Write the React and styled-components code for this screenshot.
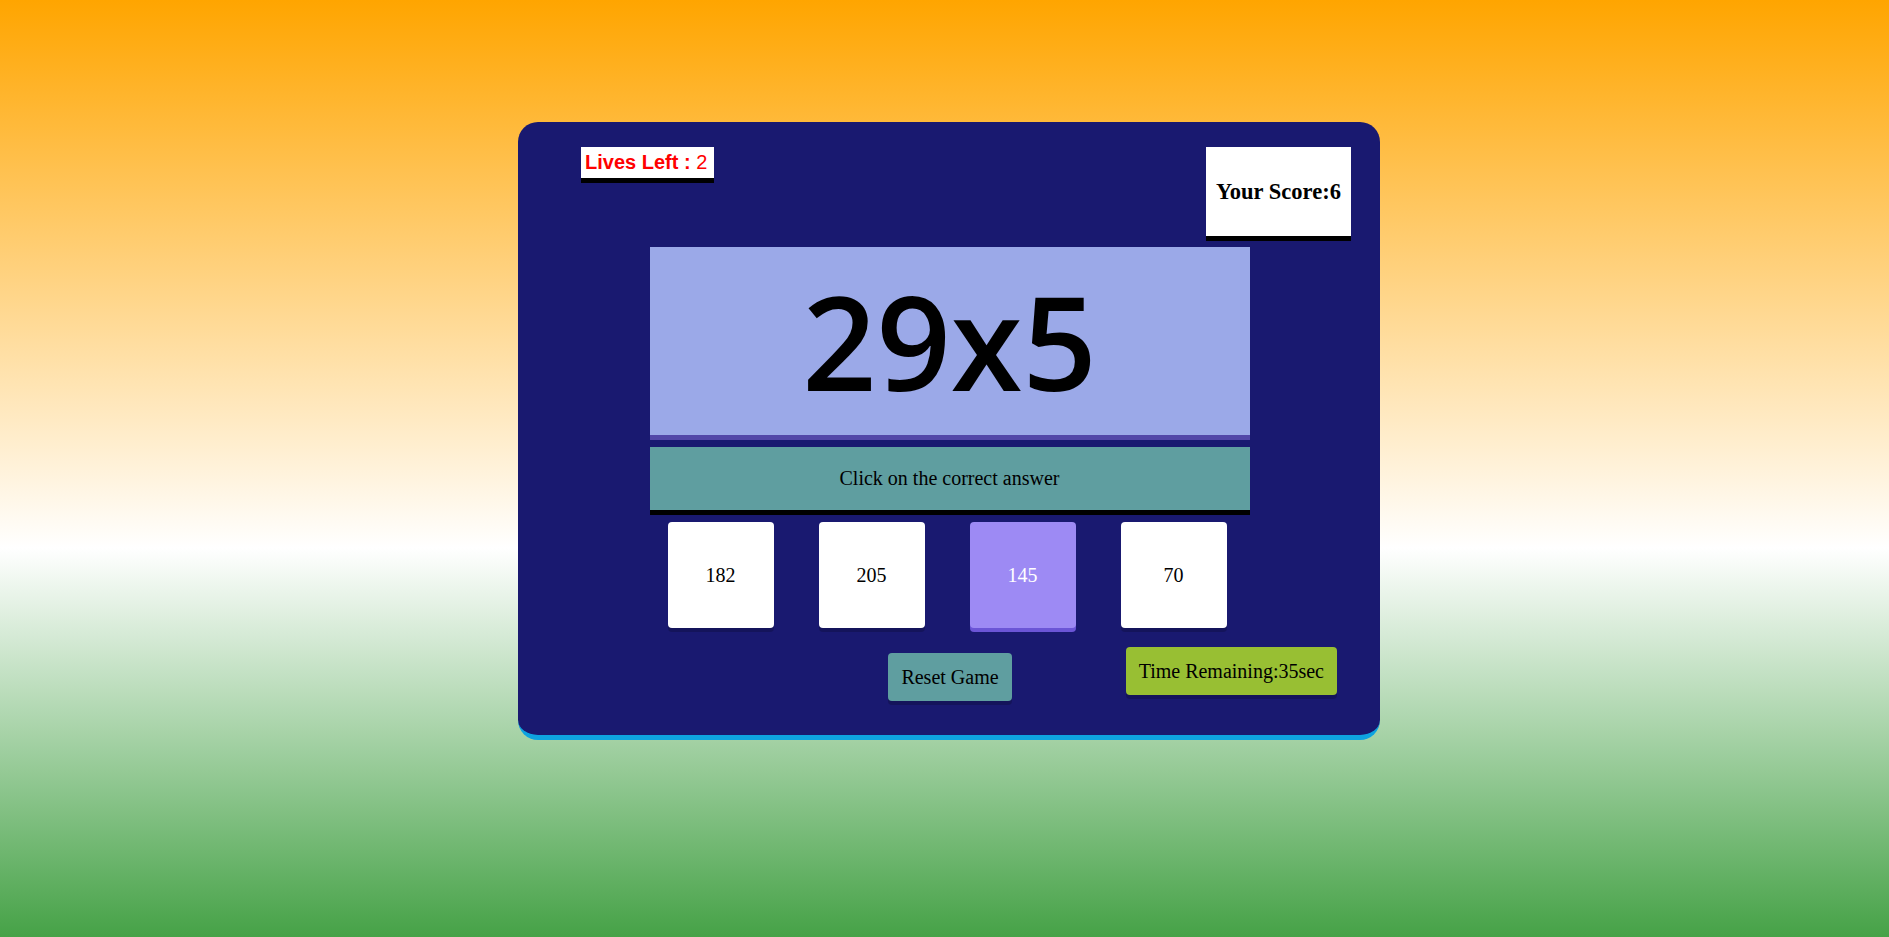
import React from "react";
import styled, { createGlobalStyle } from "styled-components";

const GlobalStyle = createGlobalStyle`
  html, body {
    margin: 0;
    padding: 0;
  }
  body {
    min-height: 100vh;
    font-family: "Liberation Serif", "Times New Roman", serif;
    background: linear-gradient(to bottom, #ffa500 0%, #ffffff 58.5%, #46a247 100%);
  }
`;

const Page = styled.div`
  min-height: 100vh;
  box-sizing: border-box;
  padding: 122px 0 0 9px;
  display: flex;
  justify-content: center;
  align-items: flex-start;
`;

const Card = styled.div`
  width: 862px;
  height: 618px;
  box-sizing: border-box;
  background: #191970;
  border-radius: 20px;
  border-bottom: 5px solid #0ea3e0;
  padding-top: 25px;
  display: flex;
  flex-direction: column;
`;

const Header = styled.div`
  display: flex;
  justify-content: space-between;
  align-items: flex-start;
  padding: 0 29px 0 63px;
`;

const Lives = styled.div`
  background: #ffffff;
  color: #ff0000;
  font-family: "Liberation Sans", Arial, sans-serif;
  font-size: 20px;
  line-height: 23px;
  padding: 4px 7px 4px 4px;
  border-bottom: 5px solid #000000;
  white-space: nowrap;
`;

const LivesLabel = styled.b`
  font-weight: 700;
`;

const Score = styled.div`
  width: 145px;
  height: 89px;
  background: #ffffff;
  border-bottom: 5px solid #000000;
  display: flex;
  align-items: center;
  justify-content: center;
  font-family: "Liberation Serif", "Times New Roman", serif;
  font-weight: 700;
  font-size: 22.5px;
  color: #000;
  white-space: nowrap;
`;

const Main = styled.div`
  width: 600px;
  margin: 6px auto 0;
  padding-left: 1px;
  display: flex;
  flex-direction: column;
`;

const Question = styled.div`
  height: 188px;
  background: #9ba9e8;
  border-bottom: 5px solid #5247a8;
  display: flex;
  align-items: center;
  justify-content: center;
  font-family: "Comic Sans MS", "Open Sans", sans-serif;
  font-size: 130px;
  font-weight: 600;
  color: #000;
  line-height: 1;
`;

const Instruction = styled.div`
  margin-top: 7px;
  height: 63px;
  background: #5f9ea0;
  border-bottom: 5px solid #000000;
  display: flex;
  align-items: center;
  justify-content: center;
  font-size: 20px;
  color: #000;
`;

const Answers = styled.div`
  margin-top: 7px;
  display: flex;
  gap: 45px;
  padding-left: 18px;
`;

const Answer = styled.div`
  width: 106px;
  height: 106px;
  border-radius: 4px;
  display: flex;
  align-items: center;
  justify-content: center;
  font-size: 20px;
  background: ${(p) => (p.$active ? "#9d8af4" : "#ffffff")};
  color: ${(p) => (p.$active ? "#ffffff" : "#000000")};
  box-shadow: ${(p) =>
    p.$active ? "0 4px 0 #6b55d6" : "0 4px 0 rgba(0, 0, 0, 0.18)"};
`;

const Footer = styled.div`
  margin-top: 19px;
  display: grid;
  grid-template-columns: 1fr auto 1fr;
  align-items: start;
`;

const ResetButton = styled.div`
  grid-column: 2;
  margin-top: 6px;
  margin-left: 2px;
  background: #5f9ea0;
  color: #000;
  font-size: 20px;
  line-height: 23px;
  padding: 12.5px 13px;
  border-radius: 4px;
  box-shadow: 0 4px 0 rgba(0, 0, 0, 0.18);
  white-space: nowrap;
`;

const Timer = styled.div`
  grid-column: 3;
  justify-self: end;
  margin-right: 43px;
  background: #98bf33;
  color: #000;
  font-size: 20px;
  line-height: 23px;
  padding: 12.5px 13px;
  border-radius: 4px;
  box-shadow: 0 4px 0 rgba(0, 0, 0, 0.18);
  white-space: nowrap;
`;

const answers = [
  { value: 182 },
  { value: 205 },
  { value: 145, active: true },
  { value: 70 },
];

export default function App() {
  return (
    <>
      <GlobalStyle />
      <Page>
        <Card>
          <Header>
            <Lives>
              <LivesLabel>Lives Left : </LivesLabel>2
            </Lives>
            <Score>Your Score:6</Score>
          </Header>
          <Main>
            <Question>29x5</Question>
            <Instruction>Click on the correct answer</Instruction>
            <Answers>
              {answers.map((a) => (
                <Answer key={a.value} $active={a.active}>
                  {a.value}
                </Answer>
              ))}
            </Answers>
          </Main>
          <Footer>
            <ResetButton>Reset Game</ResetButton>
            <Timer>Time Remaining:35sec</Timer>
          </Footer>
        </Card>
      </Page>
    </>
  );
}
